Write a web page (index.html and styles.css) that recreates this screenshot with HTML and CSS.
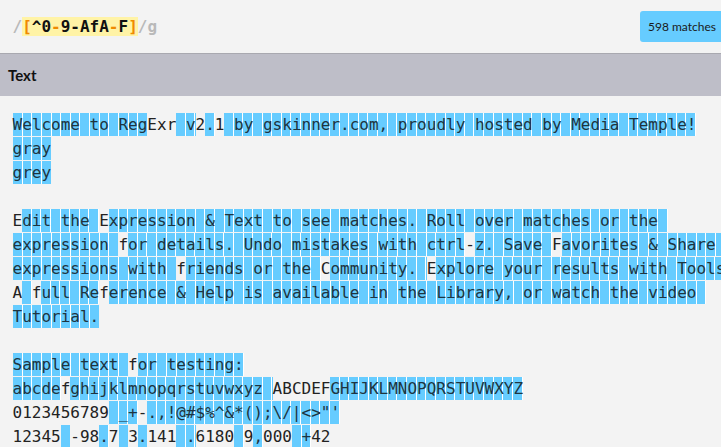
FILE: index.html
```html
<!DOCTYPE html>
<html lang="en">
<head>
<meta charset="utf-8">
<title>RegExr</title>
<link rel="stylesheet" href="styles.css">
</head>
<body>
<header class="expr-bar">
  <div class="expr"><span class="delim">/</span><span class="set"><span class="op">[</span>^0<span class="op">-</span>9-AfA<span class="op">-</span>F<span class="op">]</span></span><span class="delim">/g</span></div>
  <div class="badge">598 matches</div>
</header>
<div class="section-title">Text</div>
<main class="text">
  <div class="ln"><i>Welcome to Reg</i>Exr<i> v</i>2<i>.</i>1<i> by gskinner.com, proudly hosted by Media Temple!</i></div>
  <div class="ln"><i>gray</i></div>
  <div class="ln"><i>grey</i></div>
  <div class="ln"></div>
  <div class="ln">E<i>dit the </i>E<i>xpression &amp; Text to see matches. Roll over matches or the </i></div>
  <div class="ln"><i>expression </i>f<i>or details. Undo mistakes with ctrl</i>-<i>z. Save </i>F<i>avorites &amp; Share </i></div>
  <div class="ln"><i>expressions with </i>f<i>riends or the </i>C<i>ommunity. </i>E<i>xplore your results with Tools. </i></div>
  <div class="ln">A<i> </i>f<i>ull Re</i>f<i>erence &amp; Help is available in the Library, or watch the video </i></div>
  <div class="ln"><i>Tutorial.</i></div>
  <div class="ln"></div>
  <div class="ln"><i>Sample text </i>f<i>or testing:</i></div>
  <div class="ln"><i>abcde</i>f<i>ghijklmnopqrstuvwxyz </i>ABCDEF<i>GHIJKLMNOPQRSTUVWXYZ</i></div>
  <div class="ln">0123456789<i> _+</i>-<i>.,!@#$%^&amp;*();\/|&lt;&gt;"'</i></div>
  <div class="ln">12345<i> </i>-98<i>.</i>7<i> </i>3<i>.</i>141<i> .</i>6180<i> </i>9<i>,</i>000<i> +</i>42</div>
</main>
</body>
</html>
```

FILE: styles.css
```css
html, body {
  margin: 0;
  padding: 0;
}
body {
  width: 721px;
  height: 447px;
  overflow: hidden;
  background: #f3f3f3;
  color: #222;
}
.expr-bar {
  height: 53px;
  display: flex;
  align-items: center;
  justify-content: space-between;
  padding: 0 0 0 12.5px;
  border-bottom: 1px solid #a9a9b0;
  box-sizing: content-box;
}
.expr {
  font-family: "DejaVu Sans Mono", monospace;
  font-weight: bold;
  font-size: 16px;
  color: #111;
  white-space: pre;
}
.delim {
  color: #b9b9b9;
}
.set {
  background: #fff3a6;
}
.op {
  color: #ef8a00;
}
.badge {
  height: 31px;
  line-height: 31px;
  padding: 0 8px;
  margin-right: -3px;
  background: #66ccff;
  border-radius: 3px;
  font-family: Lato, "Open Sans", sans-serif;
  font-size: 12px;
  color: #1a1a1a;
}
.section-title {
  height: 42px;
  line-height: 42px;
  padding-left: 8px;
  background: #bebec8;
  font-family: Lato, "Open Sans", sans-serif;
  font-weight: bold;
  font-size: 15px;
  color: #111;
}
.text {
  padding: 17px 0 0 12.5px;
  width: 760px;
  font-family: "DejaVu Sans Mono", monospace;
  font-size: 16px;
  line-height: 24px;
  color: #222;
}
.ln {
  height: 24px;
  white-space: pre;
}
.ln i {
  font-style: normal;
  color: #1e3440;
  padding: 1.7px 0;
  background: repeating-linear-gradient(90deg, #66ccff 0, #66ccff 8.633px, #ffffff 8.633px, #ffffff 9.6328px);
}
```
